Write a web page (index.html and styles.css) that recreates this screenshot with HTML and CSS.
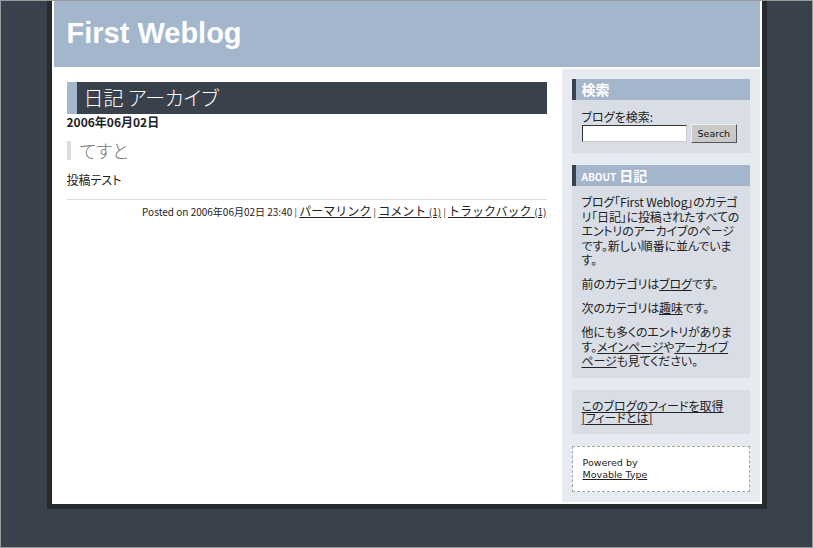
FILE: index.html
```html
<!DOCTYPE html>
<html lang="ja">
<head>
    <meta charset="UTF-8">
    <title>First Weblog: 日記 アーカイブ</title>
    <link rel="stylesheet" href="styles.css">
</head>
<body>
    <div class="frame">
        <div class="page">
            <header class="banner">
                <h1>First Weblog</h1>
            </header>

            <div class="content">
                <main class="main">
                    <h2 class="archive-title">日記 アーカイブ</h2>
                    <h3 class="date">2006年06月02日</h3>
                    <article class="entry">
                        <h4 class="entry-title">てすと</h4>
                        <p>投稿テスト</p>
                        <p class="posted">Posted on 2006年06月02日 23:40 <span class="sep">|</span> <a href="#">パーマリンク</a> <span class="sep">|</span> <a href="#">コメント <small>(1)</small></a> <span class="sep">|</span> <a href="#">トラックバック <small>(1)</small></a></p>
                    </article>
                </main>

                <aside class="sidebar">
                    <div class="module">
                        <h2 class="module-title">検索</h2>
                        <div class="module-body">
                            <label for="search">ブログを検索:</label>
                            <div class="search-row">
                                <input type="text" id="search">
                                <button>Search</button>
                            </div>
                        </div>
                    </div>

                    <div class="module">
                        <h2 class="module-title"><span class="caps">About</span> 日記</h2>
                        <div class="module-body about">
                            <p>ブログ「First Weblog」のカテゴリ「日記」に投稿されたすべてのエントリのアーカイブのページです。新しい順番に並んでいます。</p>
                            <p>前のカテゴリは<a href="#">ブログ</a>です。</p>
                            <p>次のカテゴリは<a href="#">趣味</a>です。</p>
                            <p>他にも多くのエントリがあります。<a href="#">メインページ</a>や<a href="#">アーカイブページ</a>も見てください。</p>
                        </div>
                    </div>

                    <div class="module">
                        <div class="module-body feed">
                            <a href="#">このブログのフィードを取得</a><br>
                            <a href="#">[フィードとは]</a>
                        </div>
                    </div>

                    <div class="module powered">
                        Powered by<br>
                        <a href="#">Movable Type</a>
                    </div>
                </aside>
            </div>
        </div>
    </div>
</body>
</html>
```

FILE: styles.css
```css
:root {
    --dark: #38414c;
    --shadow: #262b30;
    --blue: #a3b6cc;
    --side-bg: #e6eaf1;
    --module-bg: #d9dee6;
    --text: #222;
}
body {
    margin: 0;
    font-family: "Noto Sans CJK JP", sans-serif;
    font-feature-settings: "palt";
    color: var(--text);
    background: var(--dark);
}
.frame {
    height: 548px;
    box-sizing: border-box;
    border: 1px solid #9a9a9a;
    overflow: hidden;
}
.page {
    width: 706px;
    margin: 0 auto;
    padding: 0 2px 2px;
    background: #fff;
    box-shadow: 0 0 0 5px var(--shadow);
}
.banner {
    height: 66px;
    background: var(--blue);
}
.banner h1 {
    margin: 0;
    padding: 18px 0 0 13px;
    font-family: "Liberation Sans", Arial, sans-serif;
    font-size: 29px;
    line-height: 28px;
    font-weight: bold;
    color: #fff;
}
.content {
    display: flex;
    margin-top: 2px;
}
.main {
    width: 480px;
    margin-left: 13px;
    padding-top: 13px;
}
.archive-title {
    margin: 0;
    height: 32px;
    line-height: 32px;
    padding-left: 7px;
    border-left: 10px solid var(--blue);
    background: var(--dark);
    color: #fff;
    font-size: 20px;
    font-weight: 300;
}
.date {
    margin: 0;
    font-size: 12px;
    line-height: 16px;
    font-weight: bold;
}
.entry-title {
    margin: 11px 0 0;
    padding-left: 9px;
    border-left: 4px solid var(--module-bg);
    font-size: 18px;
    line-height: 19px;
    font-weight: 300;
    color: #777;
}
.entry p {
    margin: 12px 0 0;
    font-size: 12px;
    line-height: 16px;
}
.entry .posted {
    margin-top: 11px;
    padding-top: 3px;
    border-top: 1px solid #dcdcdc;
    text-align: right;
    font-size: 10px;
    font-feature-settings: normal;
}
.posted a {
    font-size: 12px;
}
.posted small {
    font-size: 10px;
}
.posted .sep {
    font-size: 9px;
}
a {
    color: var(--text);
}
.sidebar {
    width: 178px;
    margin-left: auto;
    padding: 10px;
    background: var(--side-bg);
}
.module {
    margin-bottom: 12px;
}
.module:last-child {
    margin-bottom: 0;
}
.module-title {
    margin: 0;
    height: 21px;
    line-height: 21px;
    padding-left: 6px;
    border-left: 4px solid var(--dark);
    background: var(--blue);
    color: #fff;
    font-size: 14px;
    font-weight: bold;
}
.caps {
    text-transform: uppercase;
    font-size: 10px;
}
.module-body {
    padding: 10px;
    background: var(--module-bg);
    font-size: 12px;
    line-height: 14.5px;
}
.module-body label {
    display: block;
    height: 14px;
    line-height: 14px;
}
.about {
    padding: 9px 10px 9px;
    letter-spacing: -0.15px;
}
.about p {
    margin: 0 0 9.5px;
}
.about p:last-child {
    margin-bottom: 0;
}
.search-row {
    display: flex;
    align-items: center;
    gap: 4px;
    height: 19px;
}
.search-row input {
    width: 101px;
    height: 13px;
    margin: 0;
    padding: 1px;
    border: 1px solid #333;
    border-right-color: #ccc;
    border-bottom-color: #ccc;
    background: #fff;
}
.search-row button {
    height: 19px;
    padding: 0 6px;
    border: 1px solid;
    border-color: #eee #555 #555 #eee;
    background: #c9c9c9;
    font-family: "DejaVu Sans", sans-serif;
    font-size: 9.5px;
    color: #111;
}
.feed {
    line-height: 12px;
}
.powered {
    padding: 10px;
    border: 1px dashed #a6a6a6;
    background: #fff;
    font-family: "DejaVu Sans", sans-serif;
    font-size: 9.5px;
    line-height: 12px;
}
```
